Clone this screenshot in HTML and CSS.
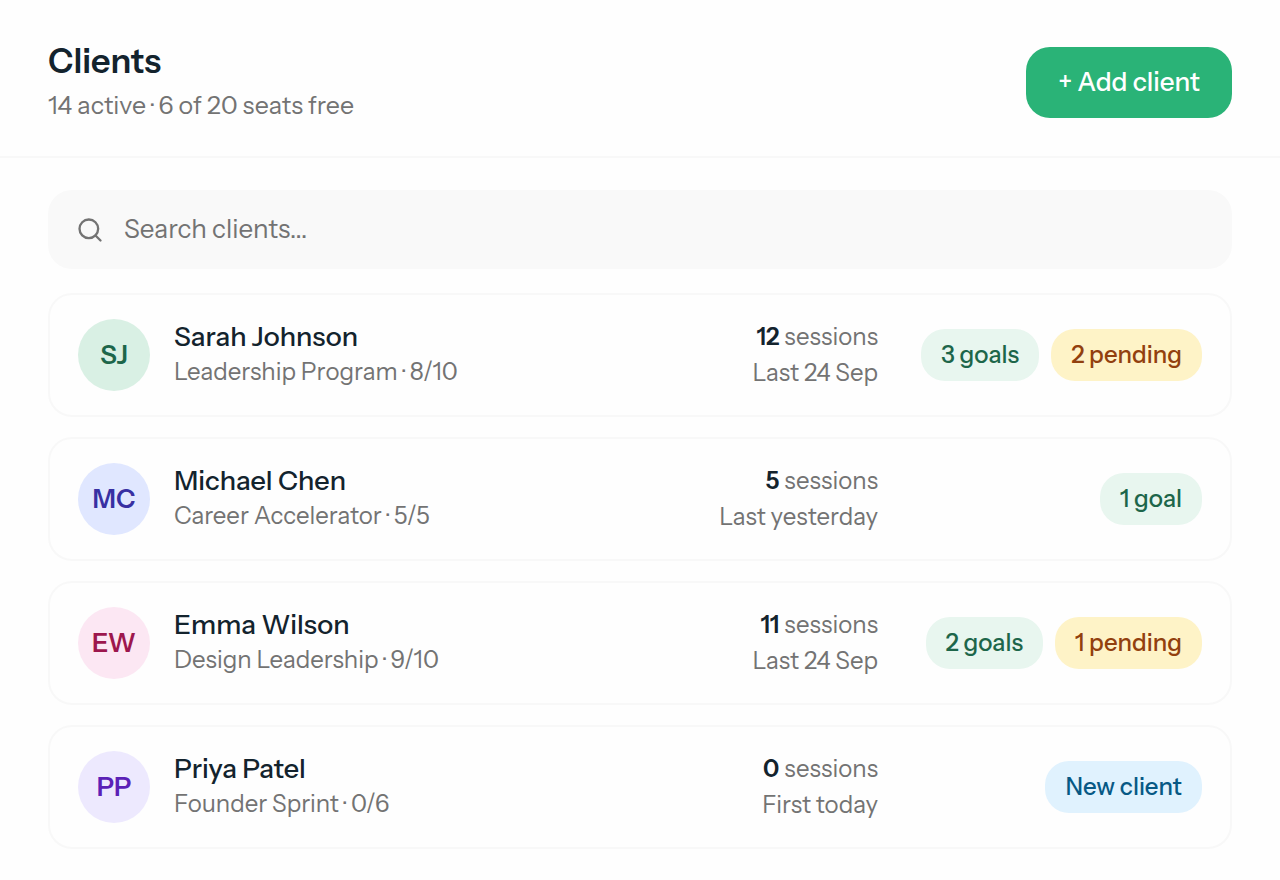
FILE: index.html
```html
<!DOCTYPE html>
<html lang="en">
<head>
<meta charset="utf-8">
<meta name="viewport" content="width=device-width, initial-scale=1">
<title>Clients</title>
<link rel="stylesheet" href="styles.css">
</head>
<body>
<header class="header">
  <div>
    <h1 class="title">Clients</h1>
    <p class="subtitle">14 active · 6 of 20 seats free</p>
  </div>
  <button class="add" type="button">+ Add client</button>
</header>
<main class="content">
  <label class="search">
    <svg class="search-icon" viewBox="0 0 24 24" aria-hidden="true"><circle cx="11" cy="11" r="8"/><path d="m21 21-4.3-4.3"/></svg>
    <input class="search-input" type="search" placeholder="Search clients..." aria-label="Search clients">
  </label>
  <ul class="list">
    <li class="card">
      <span class="avatar green">SJ</span>
      <div class="info"><h2 class="name">Sarah Johnson</h2><p class="meta">Leadership Program · 8/10</p></div>
      <div class="sessions"><p><strong>12</strong> sessions</p><p>Last 24 Sep</p></div>
      <div class="badges"><span class="badge goal">3 goals</span><span class="badge pending">2 pending</span></div>
    </li>
    <li class="card">
      <span class="avatar indigo">MC</span>
      <div class="info"><h2 class="name">Michael Chen</h2><p class="meta">Career Accelerator · 5/5</p></div>
      <div class="sessions"><p><strong>5</strong> sessions</p><p>Last yesterday</p></div>
      <div class="badges"><span class="badge goal">1 goal</span></div>
    </li>
    <li class="card">
      <span class="avatar pink">EW</span>
      <div class="info"><h2 class="name">Emma Wilson</h2><p class="meta">Design Leadership · 9/10</p></div>
      <div class="sessions"><p><strong>11</strong> sessions</p><p>Last 24 Sep</p></div>
      <div class="badges"><span class="badge goal">2 goals</span><span class="badge pending">1 pending</span></div>
    </li>
    <li class="card">
      <span class="avatar violet">PP</span>
      <div class="info"><h2 class="name">Priya Patel</h2><p class="meta">Founder Sprint · 0/6</p></div>
      <div class="sessions"><p><strong>0</strong> sessions</p><p>First today</p></div>
      <div class="badges"><span class="badge new">New client</span></div>
    </li>
  </ul>
</main>
</body>
</html>
```
FILE: styles.css
```css
* { box-sizing: border-box; margin: 0; padding: 0; }
body {
  background: #fefefe;
  color: #13232d;
  font-family: "Instrument Sans", Inter, "Liberation Sans", sans-serif;
  font-size: 24px;
  line-height: 36px;
}
.header {
  display: flex;
  align-items: center;
  justify-content: space-between;
  padding: 40px 48px 32px;
  border-bottom: 2px solid #f8f8f8;
}
.title { font-size: 34px; line-height: 42px; font-weight: 600; }
.subtitle { margin-top: 4px; font-size: 25px; line-height: 38px; color: #737373; }
.add {
  padding: 16px 32px;
  border: 0;
  border-radius: 24px;
  background: #2ab377;
  color: #fff;
  font: inherit;
  font-size: 26px;
  line-height: 39px;
  font-weight: 500;
}
.content { display: flex; flex-direction: column; gap: 24px; padding: 32px 48px; }
.search {
  display: flex;
  align-items: center;
  gap: 20px;
  padding: 20px 28px;
  border-radius: 24px;
  background: #f9f9f9;
}
.search-icon {
  flex: none;
  width: 28px;
  height: 28px;
  fill: none;
  stroke: #737373;
  stroke-width: 2;
  stroke-linecap: round;
  stroke-linejoin: round;
}
.search-input {
  flex: 1;
  min-width: 0;
  border: 0;
  outline: 0;
  background: none;
  color: inherit;
  font: inherit;
  font-size: 26px;
  line-height: 39px;
  height: 39px;
}
.search-input::placeholder { color: #737373; opacity: 1; }
.list { display: flex; flex-direction: column; gap: 20px; list-style: none; }
.card {
  display: flex;
  align-items: center;
  gap: 24px;
  padding: 24px 28px;
  border: 2px solid #f8f8f8;
  border-radius: 24px;
}
.avatar {
  flex: none;
  display: grid;
  place-items: center;
  width: 72px;
  height: 72px;
  border-radius: 50%;
  font-size: 26px;
  font-weight: 600;
}
.green { background: #d9f0e4; color: #1d664a; }
.indigo { background: #e0e7ff; color: #3730a3; }
.pink { background: #fce7f3; color: #9d174d; }
.violet { background: #ede9fe; color: #5b21b6; }
.info { flex: 1; min-width: 0; padding-bottom: 2px; }
.name { font-size: 27px; line-height: 35px; font-weight: 500; }
.meta { line-height: 35px; color: #737373; }
.sessions { color: #737373; text-align: right; white-space: nowrap; }
.sessions strong { color: #13232d; font-weight: 600; }
.badges { flex: none; display: flex; justify-content: flex-end; gap: 12px; width: 300px; }
.badge { padding: 8px 20px; border-radius: 24px; font-weight: 500; white-space: nowrap; }
.goal { background: #e8f6ef; color: #1d664a; }
.pending { background: #fef3c7; color: #92400e; }
.new { background: #e0f2fe; color: #075985; }
```
